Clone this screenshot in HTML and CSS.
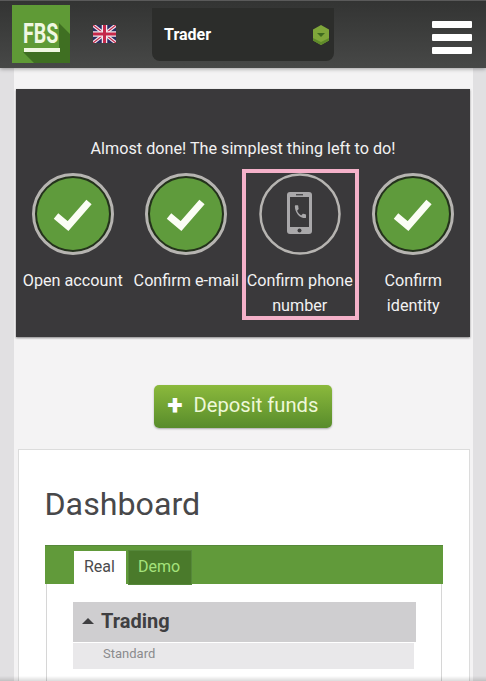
FILE: index.html
```html
<!DOCTYPE html>
<html lang="en">
<head>
    <meta charset="UTF-8">
    <meta name="viewport" content="width=device-width, initial-scale=1.0">
    <title>FBS Dashboard</title>
    <link rel="stylesheet" href="styles.css">
</head>
<body>
    <header class="topbar">
        <svg class="logo" width="58" height="58" viewBox="0 0 58 58">
            <rect width="58" height="58" fill="#5f9a36"/>
            <polygon points="11,47 47,47 47,18 58,29 58,58 22,58" fill="#3f6f22"/>
            <text transform="translate(11 38) scale(.7 1)" font-family="Roboto" font-weight="700" font-size="28" fill="#f0f7e2">FBS</text>
            <rect x="12" y="43" width="36" height="4" fill="#f0f7e2"/>
        </svg>
        <svg class="flag" width="23" height="18" viewBox="0 0 23 18">
            <rect width="23" height="18" fill="#2a2c63"/>
            <path d="M0 0L23 18M23 0L0 18" stroke="#f2e9ee" stroke-width="3.4"/>
            <path d="M0 0L23 18M23 0L0 18" stroke="#c4284a" stroke-width="1.2"/>
            <path d="M11.5 0V18M0 9H23" stroke="#f2e9ee" stroke-width="5.5"/>
            <path d="M11.5 0V18M0 9H23" stroke="#c4284a" stroke-width="3"/>
        </svg>
        <div class="account">
            <span>Trader</span>
            <svg width="18" height="20" viewBox="0 0 18 20">
                <polygon points="9,0 17,4.5 17,15.5 9,20 1,15.5 1,4.5" fill="#7fa63a"/>
                <polygon points="1,13 9,17 17,13 17,15.5 9,20 1,15.5" fill="#5f8a2a"/>
                <polygon points="5,8 13,8 9,12" fill="#3f6a1f"/>
            </svg>
        </div>
        <div class="burger"><i></i><i></i><i></i></div>
    </header>

    <main class="wrapper">
        <section class="progress">
            <p class="progress-title">Almost done! The simplest thing left to do!</p>
            <div class="steps">
                <div class="step">
                    <svg width="82" height="82" viewBox="0 0 82 82">
                        <circle cx="41" cy="41" r="39.5" fill="#24321c" stroke="#b6b4b1" stroke-width="3"/>
                        <circle cx="41" cy="41" r="36" fill="#5f9b3c"/>
                        <path d="M24 43L36 53L57 29" fill="none" stroke="#fbfdf5" stroke-width="7"/>
                    </svg>
                    <span>Open account</span>
                </div>
                <div class="step">
                    <svg width="82" height="82" viewBox="0 0 82 82">
                        <circle cx="41" cy="41" r="39.5" fill="#24321c" stroke="#b6b4b1" stroke-width="3"/>
                        <circle cx="41" cy="41" r="36" fill="#5f9b3c"/>
                        <path d="M24 43L36 53L57 29" fill="none" stroke="#fbfdf5" stroke-width="7"/>
                    </svg>
                    <span>Confirm e-mail</span>
                </div>
                <div class="step step-active">
                    <svg width="82" height="82" viewBox="0 0 82 82">
                        <circle cx="41" cy="41" r="39.5" fill="none" stroke="#b6b4b1" stroke-width="2.5"/>
                        <rect x="28" y="19" width="25" height="42" rx="3" fill="#a9a8aa"/>
                        <rect x="31" y="24" width="19" height="30" fill="#3a393b"/>
                        <rect x="37" y="21" width="7" height="1.4" fill="#4a494b"/>
                        <circle cx="40.5" cy="57.5" r="2" fill="#3a393b"/>
                        <path transform="translate(34 30) scale(.62 .72)" d="M6.62 10.79c1.44 2.83 3.76 5.14 6.59 6.59l2.2-2.2c.27-.27.67-.36 1.02-.24 1.12.37 2.33.57 3.57.57.55 0 1 .45 1 1V20c0 .55-.45 1-1 1-9.39 0-17-7.61-17-17 0-.55.45-1 1-1h3.5c.55 0 1 .45 1 1 0 1.25.2 2.45.57 3.57.11.35.03.74-.25 1.02l-2.2 2.2z" fill="#a9a8aa"/>
                    </svg>
                    <span>Confirm phone number</span>
                </div>
                <div class="step">
                    <svg width="82" height="82" viewBox="0 0 82 82">
                        <circle cx="41" cy="41" r="39.5" fill="#24321c" stroke="#b6b4b1" stroke-width="3"/>
                        <circle cx="41" cy="41" r="36" fill="#5f9b3c"/>
                        <path d="M24 43L36 53L57 29" fill="none" stroke="#fbfdf5" stroke-width="7"/>
                    </svg>
                    <span>Confirm identity</span>
                </div>
            </div>
        </section>

        <div class="deposit-row">
            <a class="deposit" href="#"><b>+</b>Deposit funds</a>
        </div>

        <section class="panel">
            <h1>Dashboard</h1>
            <div class="tabs">
                <span class="tab tab-on">Real</span>
                <span class="tab">Demo</span>
            </div>
            <div class="tab-body">
                <div class="group-head"><i></i>Trading</div>
                <div class="group-row">Standard</div>
            </div>
        </section>
    </main>
    <div class="bottom-shade"></div>
</body>
</html>
```

FILE: styles.css
```css
body {
    margin: 0;
    height: 681px;
    overflow: hidden;
    font-family: 'Roboto', sans-serif;
    background-color: #e1e0e2;
}

/* Top bar */
.topbar {
    height: 68px;
    box-sizing: border-box;
    display: flex;
    align-items: flex-start;
    padding-left: 12px;
    background: linear-gradient(#333433, #474847);
    border-top: 1px solid #5a5a5a;
    box-shadow: 0 1px 4px rgba(0, 0, 0, 0.35);
    position: relative;
}

.logo {
    margin-top: 4px;
    flex-shrink: 0;
}

.flag {
    margin: 24px 0 0 23px;
    flex-shrink: 0;
}

.account {
    width: 182px;
    height: 53px;
    box-sizing: border-box;
    margin: 7px 0 0 36px;
    padding: 0 4px 0 12px;
    display: flex;
    align-items: center;
    justify-content: space-between;
    background-color: #2c2d2b;
    border-radius: 0 0 8px 8px;
    color: #fff;
    font-size: 16px;
    font-weight: 700;
}

.burger {
    margin: 20px 0 0 98px;
    width: 40px;
    display: flex;
    flex-direction: column;
    gap: 6px;
}

.burger i {
    display: block;
    height: 7px;
    background-color: #fff;
    border-radius: 1px;
}

/* Page */
.wrapper {
    margin: 0 13px 0 14px;
    padding-top: 21px;
    height: 613px;
    box-sizing: border-box;
    overflow: hidden;
    background-color: #f4f3f4;
}

.progress {
    margin: 0 3px 0 2px;
    height: 248px;
    box-sizing: border-box;
    padding-top: 47px;
    background-color: #3a393b;
    box-shadow: 0 1px 2px rgba(0, 0, 0, 0.45);
    color: #f2f2f2;
    font-size: 16.2px;
    line-height: 25px;
    text-align: center;
}

.progress-title {
    margin: 0 0 12px;
}

.steps {
    display: grid;
    grid-template-columns: repeat(4, 113.5px);
}

.step {
    display: flex;
    flex-direction: column;
    align-items: center;
    gap: 13px;
}

.step span {
    max-width: 110px;
}

.step-active {
    position: relative;
}

/* pink highlight around the current step */
.step-active::after {
    content: '';
    position: absolute;
    top: -4px;
    left: -1px;
    right: -2px;
    height: 143px;
    border: 4px solid #f4b1c9;
}

.deposit-row {
    display: flex;
    justify-content: center;
    margin: 48px 2px 0 0;
}

.deposit {
    width: 178px;
    height: 43px;
    box-sizing: border-box;
    display: flex;
    align-items: center;
    padding: 0 0 4px 14px;
    border-radius: 5px;
    background: linear-gradient(#8bb93c, #588c2b);
    box-shadow: 0 1px 2px rgba(0, 0, 0, 0.3);
    color: #eef8d8;
    font-size: 20.2px;
    text-decoration: none;
}

.deposit b {
    width: 26px;
    color: #fff;
    font-size: 28px;
    font-weight: 900;
    line-height: 28px;
}

.panel {
    margin: 21px 3px 0 4px;
    height: 232px;
    box-sizing: border-box;
    padding: 0 26px;
    background-color: #fff;
    border: 1px solid #dcdcdc;
    border-bottom: 0;
}

h1 {
    margin: 0 0 0 -0.5px;
    padding-top: 33px;
    height: 95px;
    box-sizing: border-box;
    color: #48484a;
    font-size: 32.2px;
    font-weight: 400;
    line-height: 42px;
}

.tabs {
    height: 39px;
    box-sizing: border-box;
    display: flex;
    align-items: flex-end;
    gap: 3px;
    padding-left: 29px;
    background-color: #619a3a;
    border-top: 1px solid #56883a;
}

.tab {
    width: 62px;
    height: 33px;
    box-sizing: border-box;
    padding: 0 0 2px 9px;
    display: flex;
    align-items: center;
    background-color: #4a7a2b;
    box-shadow: 0 0 0 1px #56883a;
    color: #a5e27c;
    font-size: 16px;
}

.tab-on {
    width: 52px;
    padding-left: 10px;
    background-color: #fff;
    box-shadow: none;
    color: #4b4b4d;
}

.tab-body {
    margin: 0 1px;
    height: 97px;
    box-sizing: border-box;
    padding: 18px 25px 0 26px;
    background-color: #fff;
    border: 1px solid #d6d6d6;
    border-width: 0 1px;
}

.group-head {
    height: 40px;
    box-sizing: border-box;
    padding: 0 0 2px 9px;
    display: flex;
    align-items: center;
    background-color: #cfced0;
    color: #3f3f41;
    font-size: 20px;
    font-weight: 700;
}

.group-head i {
    width: 0;
    height: 0;
    margin-right: 7px;
    border: 6px solid transparent;
    border-top: 0;
    border-bottom: 6px solid #3f3f41;
}

.group-row {
    height: 26px;
    margin: 1px 2px 0 0;
    padding-left: 30px;
    background-color: #e9e8ea;
    color: #8b8b8d;
    font-size: 13px;
    line-height: 22px;
}

.bottom-shade {
    position: fixed;
    left: 0;
    right: 0;
    bottom: 0;
    height: 5px;
    background: linear-gradient(rgba(0, 0, 0, 0), rgba(0, 0, 0, 0.14));
}
```
